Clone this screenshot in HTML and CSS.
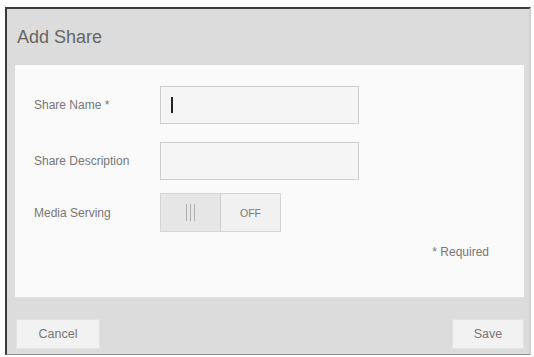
FILE: index.html
```
<!DOCTYPE html>
<html lang="en">

<head>
    <meta charset="UTF-8">
    <meta name="viewport" content="width=device-width, initial-scale=1.0">
    <title>Add Share</title>
    <link rel="stylesheet" href="styles.css">
</head>

<body>
    <div class="dialog">
        <!-- title bar -->
        <div class="dialog-title">Add Share</div>

        <!-- form panel -->
        <div class="dialog-body">
            <div class="form-row name-row">
                <label class="form-label">Share Name *</label>
                <div class="text-field"><span class="caret"></span></div>
            </div>
            <div class="form-row desc-row">
                <label class="form-label">Share Description</label>
                <div class="text-field"></div>
            </div>
            <div class="form-row media-row">
                <label class="form-label">Media Serving</label>
                <div class="toggle">
                    <div class="toggle-knob"><span></span><span></span><span></span></div>
                    <div class="toggle-state">OFF</div>
                </div>
            </div>
            <div class="required-note">* Required</div>
        </div>

        <!-- buttons -->
        <div class="dialog-footer">
            <button class="btn cancel-btn">Cancel</button>
            <button class="btn save-btn">Save</button>
        </div>
    </div>
</body>

</html>
```

FILE: styles.css
```
body {
    margin: 0;
    background-color: #ffffff;
    font-family: "Liberation Sans", Arial, sans-serif;
}

/* outer dialog */
.dialog {
    margin: 7px 0 0 5px;
    width: 526px;
    height: 348px;
    box-sizing: border-box;
    background-color: #dcdcdc;
    border-top: 2px solid #3a3a3a;
    border-left: 2px solid #3a3a3a;
    border-right: 2px solid #d0d0d0;
    border-bottom: 1px solid #8a8a8a;
    display: flex;
    flex-direction: column;
}

.dialog-title {
    height: 56px;
    box-sizing: border-box;
    padding: 18px 0 0 10px;
    font-size: 18px;
    color: #666;
}

/* white form area */
.dialog-body {
    margin: 0 5px 0 8px;
    height: 232px;
    box-sizing: border-box;
    background-color: #fafafa;
    padding: 21px 0 0 19px;
}

.form-row {
    display: flex;
    align-items: center;
}

.desc-row {
    margin-top: 18px;
}

.media-row {
    margin-top: 13px;
}

.form-label {
    width: 126px;
    font-size: 12px;
    color: #777;
}

.text-field {
    width: 199px;
    height: 38px;
    box-sizing: border-box;
    background-color: #f5f5f5;
    border: 1px solid #cfcfcf;
    display: flex;
    align-items: center;
    padding-left: 10px;
}

.caret {
    width: 1.5px;
    height: 16px;
    background-color: #222;
}

/* on / off switch */
.toggle {
    display: flex;
    height: 39px;
    border: 1px solid #d4d4d4;
    box-sizing: border-box;
}

.toggle-knob {
    width: 59px;
    background-color: #e6e6e6;
    border-right: 1px solid #cfcfcf;
    display: flex;
    justify-content: center;
    align-items: center;
    gap: 3px;
}

.toggle-knob span {
    width: 1px;
    height: 17px;
    background-color: #b0b0b0;
}

.toggle-state {
    width: 59px;
    background-color: #f1f1f1;
    display: flex;
    justify-content: center;
    align-items: center;
    font-size: 10.5px;
    color: #777;
}

.required-note {
    margin-top: 13px;
    margin-right: 35px;
    text-align: right;
    font-size: 12px;
    color: #777;
}

.dialog-footer {
    flex: 1;
    display: flex;
    justify-content: space-between;
    align-items: flex-start;
    padding: 22px 5px 0 9px;
}

.btn {
    height: 30px;
    background-color: #f2f2f2;
    border: 1px solid #e2e2e2;
    font-family: "Liberation Sans", Arial, sans-serif;
    font-size: 12.5px;
    color: #777;
    padding: 0;
}

.cancel-btn {
    width: 84px;
}

.save-btn {
    width: 72px;
}
```
